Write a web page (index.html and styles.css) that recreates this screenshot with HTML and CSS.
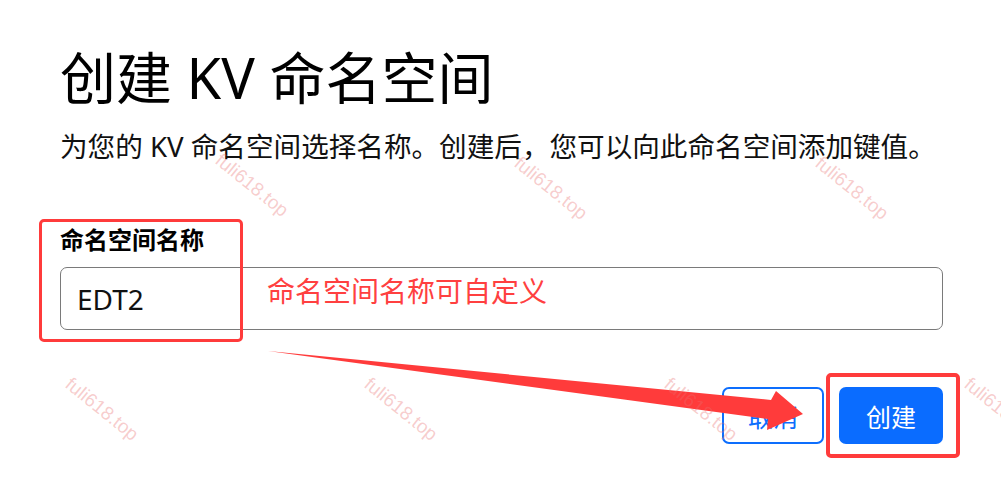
FILE: index.html
```html
<!DOCTYPE html>
<html lang="zh-CN">
<head>
  <meta charset="UTF-8" />
  <meta name="viewport" content="width=device-width, initial-scale=1.0"/>
  <title>创建 KV 命名空间</title>
  <link rel="stylesheet" href="styles.css">
</head>
<body>
  <main class="page">
    <h1 class="title">创建 KV 命名空间</h1>
    <p class="lead">为您的 KV 命名空间选择名称。创建后，您可以向此命名空间添加键值。</p>

    <form class="ns-form">
      <label for="nsName">命名空间名称</label>
      <input type="text" id="nsName" value="EDT2">

      <div class="actions">
        <button type="button" class="btn btn-outline">取消</button>
        <button type="submit" class="btn btn-primary">创建</button>
      </div>
    </form>
  </main>

  <!-- annotations drawn over the screenshot -->
  <div class="mark mark-field"></div>
  <div class="mark mark-create"></div>
  <span class="note">命名空间名称可自定义</span>
  <svg class="arrow" width="1001" height="492" viewBox="0 0 1001 492">
    <polygon points="268,351 771,400 776,391 803,414 767,430 768,419" fill="#ff3b3b"/>
  </svg>

  <span class="wm" style="left:224px; top:150px">fuli618.top</span>
  <span class="wm" style="left:523px; top:153px">fuli618.top</span>
  <span class="wm" style="left:824px; top:153px">fuli618.top</span>
  <span class="wm" style="left:74px; top:374px">fuli618.top</span>
  <span class="wm" style="left:373px; top:374px">fuli618.top</span>
  <span class="wm" style="left:673px; top:374px">fuli618.top</span>
  <span class="wm" style="left:973px; top:374px">fuli618.top</span>
</body>
</html>
```

FILE: styles.css
```css
* {
  margin: 0;
  padding: 0;
  box-sizing: border-box;
}

html, body {
  width: 1001px;
  height: 492px;
  overflow: hidden;
  background: #fff;
  color: #212529;
  font-family: "Noto Sans", "Noto Sans CJK SC", sans-serif;
}

body {
  position: relative;
}

.page {
  padding: 44px 58px 0 60px;
}

.title {
  font-size: 56px;
  font-weight: 400;
  line-height: 67px;
  color: #000;
  margin-bottom: 13px;
}

.lead {
  font-size: 27.6px;
  line-height: 44px;
  color: #111;
  white-space: nowrap;
  margin-bottom: 54px;
}

.ns-form label {
  display: block;
  font-size: 24px;
  font-weight: 700;
  line-height: 36px;
  color: #000;
  margin-bottom: 9px;
}

.ns-form input {
  display: block;
  width: 100%;
  height: 63px;
  padding: 0 16px;
  border: 1px solid #7a7a7a;
  border-radius: 7px;
  font-family: inherit;
  font-size: 28px;
  color: #111;
  background: #fff;
  outline: none;
}

.actions {
  display: flex;
  justify-content: flex-end;
  gap: 15px;
  margin-top: 57px;
}

.btn {
  height: 57px;
  padding: 0;
  border-radius: 7px;
  font-family: inherit;
  font-size: 25px;
  white-space: nowrap;
  cursor: pointer;
}

.btn-outline {
  width: 102px;
  background: #fff;
  color: #0d6efd;
  border: 2px solid #0d6efd;
}

.btn-primary {
  width: 104px;
  background: #0a6cff;
  color: #fff;
  border: none;
}

.mark {
  position: absolute;
  border: 3px solid #ff3b3b;
  border-radius: 5px;
}

.mark-field {
  left: 39px;
  top: 219px;
  width: 204px;
  height: 123px;
}

.mark-create {
  left: 826px;
  top: 373px;
  width: 134px;
  height: 85px;
  border-width: 4px;
}

.note {
  position: absolute;
  left: 267px;
  top: 271px;
  font-size: 28px;
  line-height: 40px;
  color: #ff4040;
}

.arrow {
  position: absolute;
  left: 0;
  top: 0;
  pointer-events: none;
}

.wm {
  position: absolute;
  font-family: "Liberation Sans", sans-serif;
  font-size: 19px;
  line-height: 19px;
  color: rgba(232, 110, 110, 0.35);
  transform: rotate(39deg);
  transform-origin: 0 0;
  white-space: nowrap;
  pointer-events: none;
}
```
